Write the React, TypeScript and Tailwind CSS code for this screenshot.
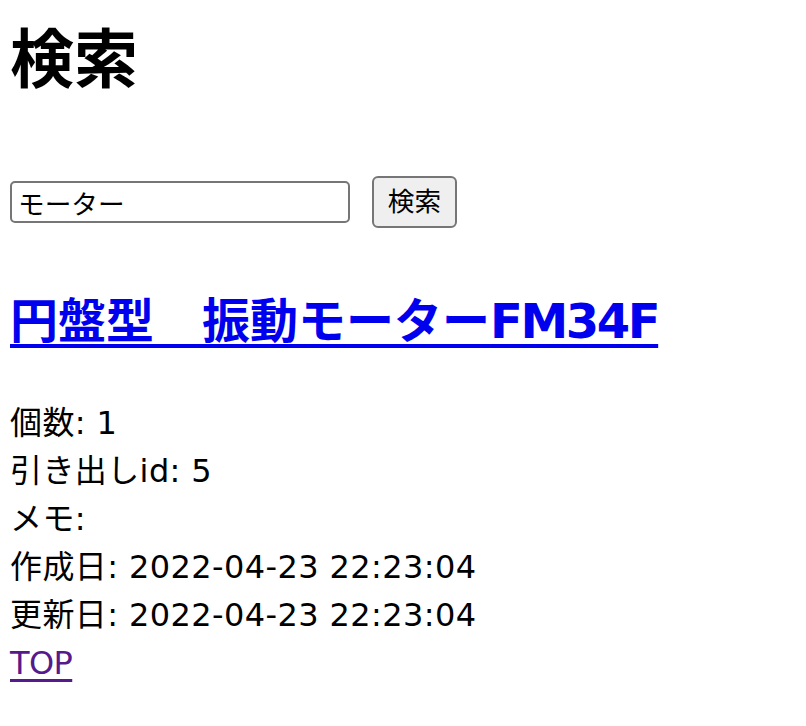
import { useState } from "react";

const FONT = { fontFamily: '"DejaVu Sans", "Noto Sans CJK JP", sans-serif' };

export default function App() {
  const [keyword, setKeyword] = useState("モーター");

  return (
    <div className="min-h-[726px] bg-white px-[10px] text-black" style={FONT}>
      <h1 className="pt-[12px] text-[64px] font-bold leading-[96px]">検索</h1>

      <form
        className="mt-[68px] flex items-center gap-[22px]"
        onSubmit={(e) => e.preventDefault()}
      >
        <input
          type="text"
          value={keyword}
          onChange={(e) => setKeyword(e.target.value)}
          className="h-[42px] w-[340px] rounded-[5px] border-2 border-[#767676] px-[6px] text-[26.67px] leading-none outline-none"
          style={FONT}
        />
        <button
          type="submit"
          className="h-[52px] w-[85px] rounded-[6px] border-2 border-[#767676] bg-[#efefef] text-[26.67px] leading-none"
          style={FONT}
        >
          検索
        </button>
      </form>

      <h2 className="mt-[57px] text-[48px] font-bold leading-[72px]">
        <a href="#" className="text-[#0000ee] underline decoration-[4px] underline-offset-[6px]">
          円盤型　振動モーター<span className="tracking-[-2.4px]">FM34F</span>
        </a>
      </h2>

      <div className="mt-[42px] text-[32px] leading-[48px]">
        <div className="tracking-[0.4px]">個数: 1</div>
        <div className="tracking-[0.4px]">引き出しid: 5</div>
        <div className="tracking-[0.4px]">メモ: </div>
        <div className="tracking-[0.4px]">作成日: 2022-04-23 22:23:04</div>
        <div className="tracking-[0.4px]">更新日: 2022-04-23 22:23:04</div>
        <a href="#" className="tracking-[-0.6px] text-[#551a8b] underline decoration-[3px] underline-offset-[5px]">
          TOP
        </a>
      </div>
    </div>
  );
}
